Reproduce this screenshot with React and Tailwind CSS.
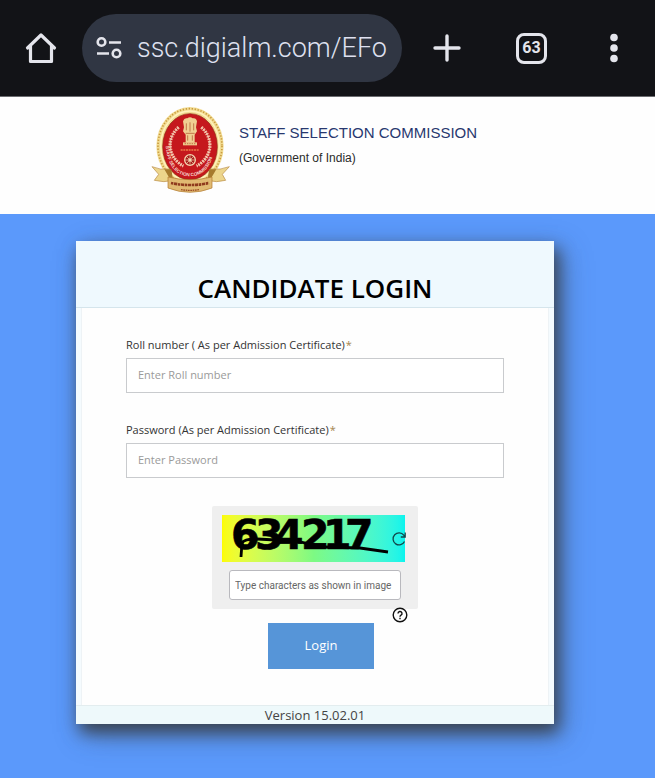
import React from "react";

const CAPTCHA_CODE = "634217";
const CAPTCHA_POSITIONS = "9 33 53 79 101 123";

function BrowserBar() {
  return (
    <div className="flex h-[97px] items-center border-b border-[#6b6c70] bg-[#121317] pr-8 pl-[25px] text-[#e4e5ec]">
      <button type="button" aria-label="Home" className="mr-[25px] shrink-0">
        <svg width="32" height="34" viewBox="0 0 32 34" fill="none" stroke="currentColor" strokeWidth="3.2" strokeLinecap="round" strokeLinejoin="round">
          <path d="M2.500 17 16 4 29.500 17M5.500 15v15.500h21V15" />
        </svg>
      </button>
      <div className="-mt-px flex h-[68px] min-w-0 flex-1 items-center rounded-full bg-[#303643] pr-3 pl-[14px]">
        <svg className="shrink-0" width="27" height="24" viewBox="0 0 27 24" fill="none" stroke="currentColor" strokeWidth="2.600">
          <circle cx="5.500" cy="6" r="3.800" />
          <path d="M13 6.500h12M1 17.500h12" />
          <circle cx="20.500" cy="17.500" r="3.800" />
        </svg>
        <input
          aria-label="Address"
          defaultValue="ssc.digialm.com/EFo"
          className="ml-[14px] w-full min-w-0 bg-transparent pt-0.5 font-['Roboto',sans-serif] text-[27px] font-light text-[#dfe1f0] outline-none"
        />
      </div>
      <button type="button" aria-label="New tab" className="ml-[30px] shrink-0">
        <svg width="30" height="30" viewBox="0 0 30 30" stroke="currentColor" strokeWidth="3.400" strokeLinecap="round">
          <path d="M15 3v24M3 15h24" />
        </svg>
      </button>
      <button
        type="button"
        aria-label="Open tabs"
        className="ml-[54px] flex size-[31px] shrink-0 items-center justify-center rounded-lg border-3 border-current font-['Roboto',sans-serif] text-base font-bold"
      >
        63
      </button>
      <button type="button" aria-label="Menu" className="ml-[58px] shrink-0">
        <svg width="18" height="30" viewBox="0 0 18 30" fill="currentColor">
          <circle cx="9" cy="4.500" r="3.800" />
          <circle cx="9" cy="15" r="3.800" />
          <circle cx="9" cy="25.500" r="3.800" />
        </svg>
      </button>
    </div>
  );
}

function Emblem() {
  return (
    <svg className="shrink-0" width="82" height="90" viewBox="30 24 246 270" fill="none">
      <defs>
        <path id="motto" d="M77 150C82 216 115 241 150 241S218 216 223 150" />
      </defs>
      <ellipse cx="150" cy="150" rx="101" ry="117" fill="#f2dc93" />
      <ellipse cx="150" cy="150" rx="96" ry="112" stroke="#c99a3e" strokeWidth="5" strokeDasharray="4 5" />
      <ellipse cx="150" cy="150" rx="88" ry="105" stroke="#fff3bd" strokeWidth="4" />
      <ellipse cx="150" cy="152" rx="82" ry="99" fill="#c5181d" stroke="#8e2415" strokeWidth="2" />
      <path d="M116 94C78 126 82 184 130 210M184 94C222 126 218 184 170 210" stroke="#f0b9a0" strokeWidth="10" strokeDasharray="5 3" />
      <path d="M116 94C78 126 82 184 130 210M184 94C222 126 218 184 170 210" stroke="#f6dfc4" strokeWidth="2" />
      <path d="M129 76q4-12 13-9 8-7 16 0 10-3 13 9l-3 18 3 12-7 10v24h-27v-24l-8-10 3-12z" fill="#f0cf92" />
      <path d="M139 82v21M150 79v28M161 82v21M137 112h27M143 118v16M157 118v16" stroke="#a94d25" strokeWidth="2" />
      <path d="M129 139h42v9h-42z" fill="#eec88b" />
      <path d="M134 143h32" stroke="#a94d25" strokeWidth="2" strokeDasharray="4 3" />
      <path d="M122 162h56" stroke="#ed7848" strokeWidth="5" strokeDasharray="6 2" />
      <circle cx="150" cy="192" r="16" fill="#a51d1a" stroke="#f4d6b2" strokeWidth="4" />
      <path d="M150 178v28M136 192h28M140 182l20 20M160 182l-20 20" stroke="#f4d6b2" strokeWidth="2" />
      <circle cx="150" cy="192" r="5" fill="#f4d6b2" />
      <text fill="#f6d9cf" fontSize="14" fontWeight="700" fontFamily="Liberation Sans, sans-serif">
        <textPath href="#motto">STAFF SELECTION COMMISSION</textPath>
      </text>
      <path d="M36 212q25 11 54 7l8 34q-25 8-55 0l13-18zM268 212q-27 11-58 7l-8 34q27 8 55 0l-10-18z" fill="#ecd58b" stroke="#b88a43" strokeWidth="2" />
      <path d="M73 220l17 29 8-4-4-25zM229 220l-17 29-8-4 4-25z" fill="#a67b2e" />
      <path d="M84 243q66 16 132 0v33q-66 26-132 0z" fill="#e1ba72" stroke="#af752c" strokeWidth="2" />
      <path d="M93 261q57 12 114 0" stroke="#8f3a1d" strokeWidth="8" strokeDasharray="7 2 10 2" />
      <path d="M123 281q27 4 54 0" stroke="#9c4d25" strokeWidth="4" strokeDasharray="5 2" />
    </svg>
  );
}

function Field({ id, label, type, placeholder }) {
  return (
    <div>
      <label htmlFor={id} className="block text-[11px] leading-[26px] text-[#333]">
        {label}
        <span className="ml-px text-[#a3834f]">*</span>
      </label>
      <input
        id={id}
        type={type}
        placeholder={placeholder}
        className="block h-[35px] w-full border border-[#c9cbce] bg-white px-[11px] pb-0.5 text-[11px] text-[#333] outline-none placeholder:text-[#9a9a9a]"
      />
    </div>
  );
}

function Captcha() {
  return (
    <div className="relative mx-auto mt-7 w-[206px] rounded-xs bg-[#efefef] pt-[9px] pr-[13px] pb-[9px] pl-[10px]">
      <div className="relative h-[47px] bg-linear-to-r from-[#fcfc00] via-[#7dfa83] to-[#08f4ee]">
        <svg className="block" width="183" height="47" viewBox="0 0 183 47" role="img" aria-label="Captcha">
          <text
            x={CAPTCHA_POSITIONS}
            y="34"
            stroke="#000"
            strokeWidth="0.6"
            fontFamily="DejaVu Sans, sans-serif"
            fontWeight="700"
            fontSize="41"
          >
            {CAPTCHA_CODE}
          </text>
          <path d="M19 42l1-14q2-4 15-4l38 2 30 6 35 1 28 4" fill="none" stroke="#000" strokeWidth="2.800" />
        </svg>
        <button type="button" aria-label="Refresh captcha" className="absolute top-4 -right-0.5">
          <svg width="16" height="16" viewBox="0 0 16 16" fill="none" stroke="#12484b" strokeWidth="1.300">
            <path d="M13.500 10.500A6 6 0 1 1 12.800 4.200L14 6M14.200 1.500V6H9.800" />
          </svg>
        </button>
      </div>
      <div className="mt-2 flex pr-1 pl-[7px]">
        <input
          aria-label="Captcha text"
          placeholder="Type characters as shown in image"
          className="h-[30px] w-full rounded-[3px] border border-[#b9b9be] bg-white px-[5px] font-['Roboto',sans-serif] text-[10px] outline-none placeholder:text-[#666]"
        />
      </div>
      <button type="button" aria-label="Help" className="absolute right-[10px] -bottom-[14px]">
        <svg className="block" width="16" height="16" viewBox="0 0 16 16" fill="none" stroke="#111" strokeWidth="1.400">
          <circle cx="8" cy="8" r="6.800" />
          <path d="M6 6.500a2 2 0 1 1 3 1.700q-1 .6-1 1.500M8 10.800v1.400" />
        </svg>
      </button>
    </div>
  );
}

export default function App() {
  return (
    <div className="flex min-h-screen flex-col bg-[#5b99fb] font-['Open_Sans',sans-serif]">
      <BrowserBar />
      <header className="flex items-start gap-[7px] bg-[#fefefe] pt-[7px] pb-5 pl-[150px]">
        <Emblem />
        <div className="pt-4 font-['Liberation_Sans',sans-serif]">
          <h1 className="text-[15px] leading-[26px] text-[#28386f]">STAFF SELECTION COMMISSION</h1>
          <p className="text-xs leading-6 text-[#2b2b2b]">(Government of India)</p>
        </div>
      </header>
      <main className="pt-[27px] pr-[101px] pb-[54px] pl-[76px]">
        <section className="bg-[#f5fbfe] shadow-[4px_8px_16px_#3a4350,8px_10px_28px_#37415066]">
          <h2 className="border-b border-[#d5e5ec] bg-[#eff9fe] pt-[29px] text-center text-[26px] leading-[37px] font-semibold text-black">
            CANDIDATE LOGIN
          </h2>
          <form
            className="mx-[5px] border-x border-[#eef3f6] bg-[#fefefe] px-11 pt-6 pb-9"
            onSubmit={(e) => e.preventDefault()}
          >
            <div className="flex flex-col gap-6">
              <Field id="roll" label="Roll number ( As per Admission Certificate)" type="text" placeholder="Enter Roll number" />
              <Field id="password" label="Password (As per Admission Certificate)" type="password" placeholder="Enter Password" />
            </div>
            <Captcha />
            <div className="mt-[14px] flex justify-center pl-3">
              <button type="submit" className="h-[46px] w-[106px] bg-[#5695d8] text-[13px] text-white">
                Login
              </button>
            </div>
          </form>
          <footer className="border-t border-[#e3edef] bg-[#eef9fb] text-center text-[13px] leading-[18px] text-[#444]">
            Version 15.02.01
          </footer>
        </section>
      </main>
    </div>
  );
}
